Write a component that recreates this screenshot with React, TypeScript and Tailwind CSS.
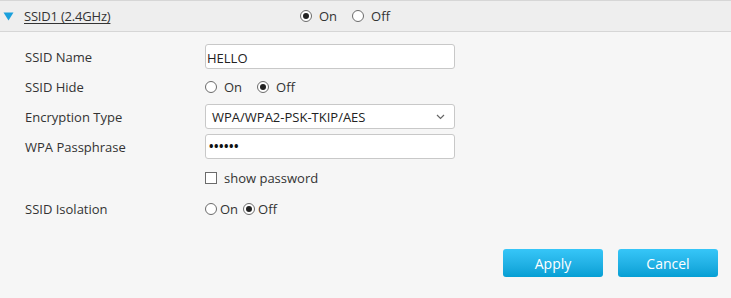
const font = { fontFamily: '"Open Sans", "Noto Sans", sans-serif' };

function Radio({ checked }: { checked?: boolean }) {
  return (
    <span className="w-[12px] h-[12px] rounded-full border border-[#6b6b6b] bg-white flex items-center justify-center shrink-0">
      {checked && <span className="w-[6px] h-[6px] rounded-full bg-[#222]" />}
    </span>
  );
}

function RadioGroup({ value, tight }: { value: 'on' | 'off'; tight?: boolean }) {
  return (
    <div className={`flex items-center ${tight ? 'gap-[5px]' : 'gap-[15px]'}`}>
      <label className={`flex items-center ${tight ? 'gap-[3px]' : 'gap-[7px]'}`}>
        <Radio checked={value === 'on'} />
        <span className="pt-[2px]">On</span>
      </label>
      <label className={`flex items-center ${tight ? 'gap-[3px]' : 'gap-[7px]'}`}>
        <Radio checked={value === 'off'} />
        <span className="pt-[2px]">Off</span>
      </label>
    </div>
  );
}

function Row({ label, className, children }: { label?: string; className: string; children: React.ReactNode }) {
  return (
    <div className={`flex items-center ${className}`}>
      <div className="w-[205px] pl-[25px] pt-[2px] shrink-0">{label}</div>
      {children}
    </div>
  );
}

export default function App() {
  return (
    <div style={font} className="w-[731px] h-[298px] bg-[#f6f6f6] text-[13px] text-[#333] overflow-hidden">
      {/* section header */}
      <div className="h-[32px] bg-[#eeeeee] border-t border-b border-[#d6d6d6] flex items-center">
        <div className="w-[300px] flex items-center pl-[3px] gap-[10px]">
          <svg width="11" height="9" viewBox="0 0 11 9">
            <path d="M0.5 0.5 H10.5 L5.5 8.5 Z" fill="#1aa0dc" />
          </svg>
          <span className="underline underline-offset-2 pt-[2px] tracking-[-0.2px]">SSID1 (2.4GHz)</span>
        </div>
        <RadioGroup value="on" />
      </div>

      <div className="pt-[12px]">
        <Row label="SSID Name" className="h-[25px]">
          <input
            defaultValue="HELLO"
            className="w-[250px] h-[25px] bg-white border border-[#c8c8c8] rounded-[3px] px-[1px] pt-[2px] text-[13px] text-[#222] outline-none"
            style={font}
          />
        </Row>
        <Row label="SSID Hide" className="h-[35px]">
          <RadioGroup value="off" />
        </Row>
        <Row label="Encryption Type" className="h-[25px]">
          <div className="relative w-[250px] h-[25px] bg-white border border-[#c8c8c8] rounded-[3px] flex items-center pl-[6px] pt-[2px] text-[#222]">
            <span>WPA/WPA2-PSK-TKIP/AES</span>
            <svg className="absolute right-[9px] top-[9px]" width="9" height="6" viewBox="0 0 9 6">
              <path d="M1 1 L4.5 4.5 L8 1" fill="none" stroke="#666" strokeWidth="1.2" />
            </svg>
          </div>
        </Row>
        <Row label="WPA Passphrase" className="h-[25px] mt-[5px]">
          <div className="w-[250px] h-[25px] bg-white border border-[#c8c8c8] rounded-[3px] flex items-center pl-[3px] text-[#111] tracking-[0.5px] text-[12px] font-bold">
            ••••••
          </div>
        </Row>
        <Row className="h-[38px]">
          <label className="flex items-center gap-[7px]">
            <span className="w-[12px] h-[12px] border border-[#6b6b6b] bg-white" />
            <span className="pt-[2px]">show password</span>
          </label>
        </Row>
        <Row label="SSID Isolation" className="h-[24px]">
          <RadioGroup value="off" tight />
        </Row>

        <div className="flex justify-end gap-[15px] pr-[13px] mt-[28px]">
          <button className="w-[100px] h-[28px] rounded-[3px] bg-gradient-to-b from-[#36c6f8] to-[#049fd4] text-white text-[14px] pt-[1px]" style={font}>
            Apply
          </button>
          <button className="w-[100px] h-[28px] rounded-[3px] bg-gradient-to-b from-[#36c6f8] to-[#049fd4] text-white text-[14px] pt-[1px]" style={font}>
            Cancel
          </button>
        </div>
      </div>
    </div>
  );
}
